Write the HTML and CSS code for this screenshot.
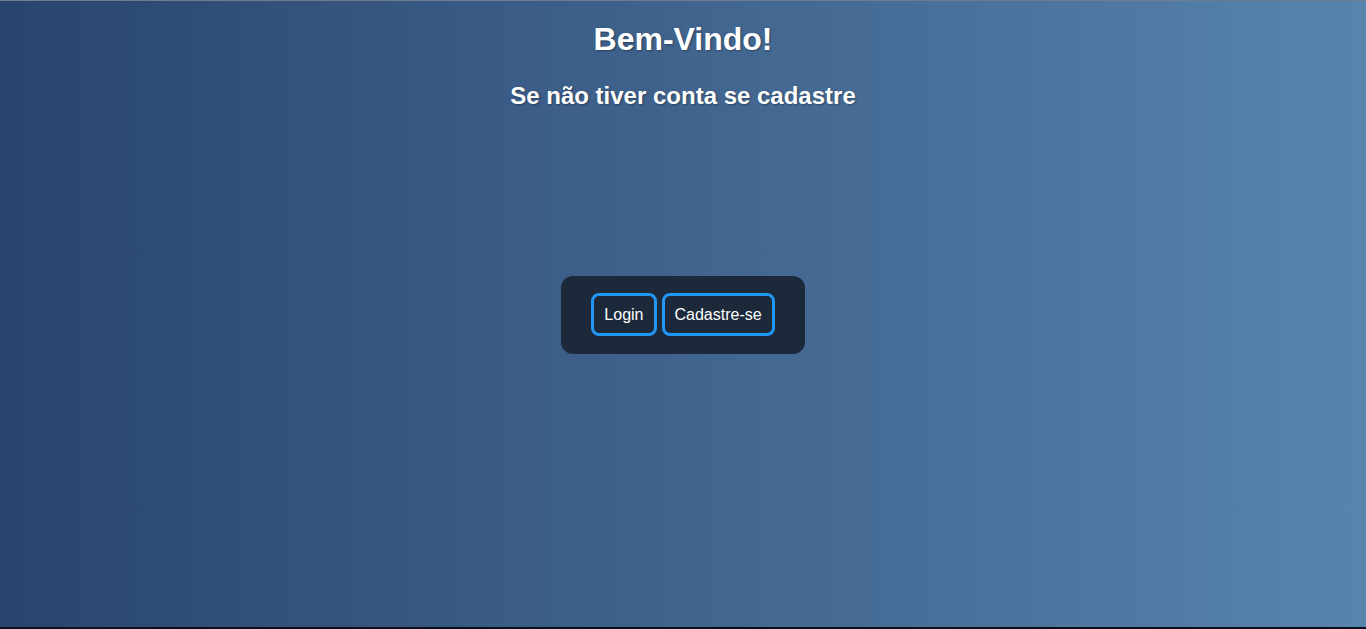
FILE: index.html
```html
<!DOCTYPE html>
<html lang="pt-BR">
<head>
<meta charset="utf-8">
<title>Bem-Vindo!</title>
<link rel="stylesheet" href="styles.css">
</head>
<body>
<div class="stage">
  <header class="intro">
    <h1 class="title">Bem-Vindo!</h1>
    <h2 class="subtitle">Se não tiver conta se cadastre</h2>
  </header>
  <div class="card">
    <button class="btn">Login</button>
    <button class="btn">Cadastre-se</button>
  </div>
</div>
</body>
</html>
```
FILE: styles.css
```css
html, body {
  margin: 0;
  padding: 0;
  height: 100%;
}
body {
  font-family: "Liberation Sans", Arial, sans-serif;
  background: linear-gradient(to right, #29446f, #5784ad);
  border-top: 1px solid #6d7d8d;
  border-bottom: 2px solid #0b0f1e;
  box-sizing: border-box;
  color: #fff;
}
.stage {
  display: grid;
  height: 100%;
  grid-template: 1fr / 1fr;
  margin-top: -1px;
}
.intro {
  grid-area: 1 / 1;
  align-self: start;
  text-align: center;
  padding-top: 1px;
}
.title {
  font-size: 32px;
  font-weight: bold;
  margin: 20px 0 24px;
  text-shadow: 1px 1px 2px rgba(0, 0, 0, 0.35);
}
.subtitle {
  font-size: 24px;
  font-weight: bold;
  margin: 0;
  text-shadow: 1px 1px 2px rgba(0, 0, 0, 0.35);
}
.card {
  grid-area: 1 / 1;
  align-self: center;
  justify-self: center;
  display: flex;
  gap: 5px;
  padding: 17px 30px 18px;
  background: #1b293b;
  border-radius: 12px;
  margin-top: 3px;
}
.btn {
  font-family: "Liberation Sans", Arial, sans-serif;
  font-size: 16px;
  line-height: 19px;
  color: #fff;
  background: #1b293b;
  border: 3px solid #2196f3;
  border-radius: 8px;
  padding: 9px 10px;
  cursor: pointer;
}
```
